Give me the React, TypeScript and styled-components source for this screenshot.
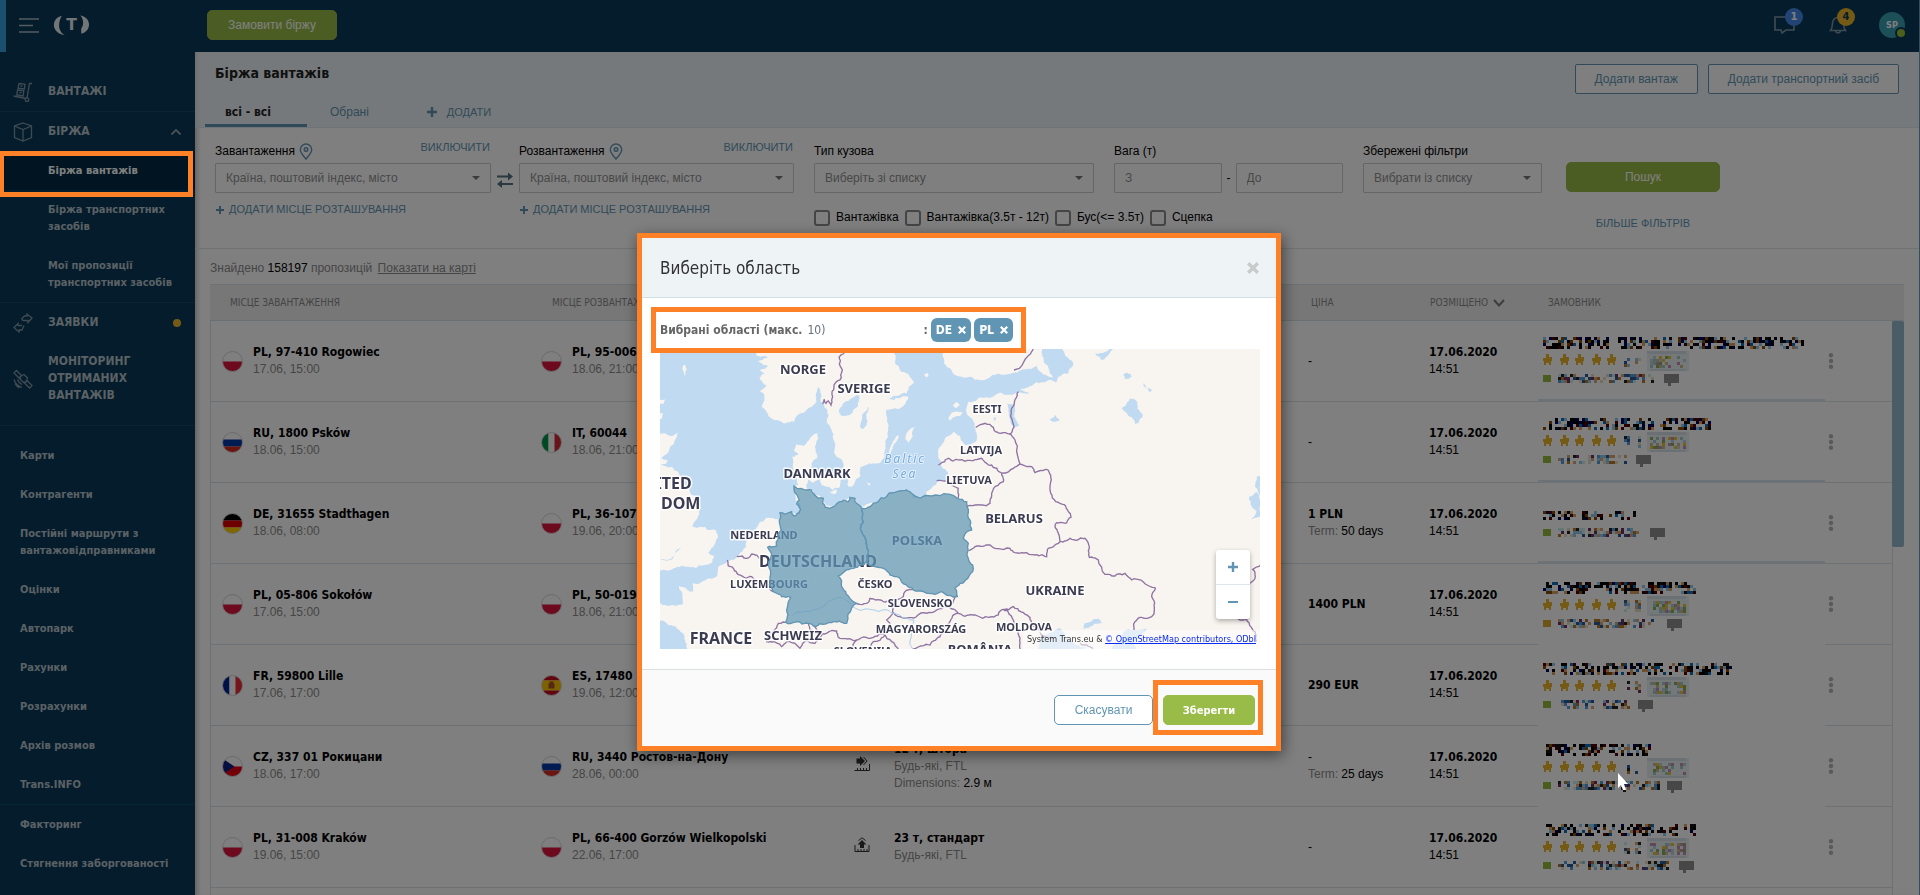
import React from 'react';
import styled, { createGlobalStyle, css } from 'styled-components';

const sans = '"Liberation Sans", Arial, sans-serif';
const strong = '"DejaVu Sans Condensed", "DejaVu Sans", Tahoma, sans-serif';
const orange = '#ff8127';
const blue = '#6095b3';
const green = '#99bb48';

const Global = createGlobalStyle`
  * { box-sizing: border-box; }
  body { margin: 0; font: 12px/17px ${sans}; color: #000; background: #fff; }
  button, input, select { font: inherit; margin: 0; }
  button { cursor: pointer; }
  a { color: inherit; text-decoration: none; }
  h1, h2, ul { margin: 0; padding: 0; list-style: none; }
`;

const Page = styled.div`
  display: flex;
  flex-direction: column;
  height: 100vh;
  overflow: hidden;
  border-right: 1px solid #6a9dbd;
`;

/* ---------- top bar ---------- */
const TopBar = styled.header`
  display: flex;
  align-items: center;
  flex: none;
  height: 52px;
  padding: 0 14px 2px 0;
  background: #083856;
  border-left: 6px solid #34a0da;
`;
const IconButton = styled.button`
  display: flex;
  position: relative;
  padding: 0;
  border: 0;
  background: none;
`;
const Brand = styled.div`
  display: flex;
  align-items: center;
  gap: 14px;
  width: 201px;
  padding-left: 13px;
`;
const Button = styled.button<{ $kind: 'fill' | 'line'; $radius?: number }>`
  height: 30px;
  padding: 0 19px;
  border: 1px solid ${(p) => (p.$kind === 'fill' ? green : blue)};
  border-radius: ${(p) => p.$radius ?? 5}px;
  background: ${(p) => (p.$kind === 'fill' ? green : '#fff')};
  color: ${(p) => (p.$kind === 'fill' ? '#fff' : blue)};
  white-space: nowrap;
`;
const OrderButton = styled(Button)`
  width: 130px;
  padding: 0;
`;
const TopIcons = styled.div`
  display: flex;
  align-items: center;
  gap: 34px;
  margin-left: auto;
`;
const Badge = styled.span<{ $warn?: boolean }>`
  position: absolute;
  top: -8px;
  right: -8px;
  width: 18px;
  height: 18px;
  border-radius: 50%;
  background: ${(p) => (p.$warn ? '#eab42a' : '#4389e8')};
  color: ${(p) => (p.$warn ? '#083856' : '#fff')};
  font: bold 11px/18px ${strong};
  text-align: center;
`;
const Avatar = styled(IconButton)`
  align-items: center;
  justify-content: center;
  width: 26px;
  height: 26px;
  margin-left: -2px;
  border-radius: 50%;
  background: #3a9eb2;
  color: #fff;
  font: bold 9px/12px ${strong};
`;
const Presence = styled.span`
  position: absolute;
  right: -2px;
  bottom: -1px;
  width: 12px;
  height: 12px;
  border: 2px solid #083856;
  border-radius: 50%;
  background: #9bbf3a;
`;

/* ---------- side menu ---------- */
const Body = styled.div`
  display: flex;
  flex: 1;
  min-height: 0;
`;
const Side = styled.nav`
  flex: none;
  width: 195px;
  padding-top: 20px;
  background: #083856;
  font: bold 11px/17px ${strong};
  color: #b6c2ca;
`;
const Group = styled.ul<{ $last?: boolean; $loose?: boolean }>`
  border-bottom: ${(p) => (p.$last ? 0 : 1)}px solid #10486a;
  ${(p) => p.$loose && css`padding-bottom: 10px;`}
`;
const MoreGroup = styled(Group)`
  &:first-of-type { padding-top: 10px; }
`;
const SideLink = styled.a<{ $level?: 1 | 2; $active?: boolean }>`
  display: flex;
  align-items: center;
  padding: 11px 14px 11px ${(p) => (p.$level === 2 ? 48 : p.$level === 1 ? 13 : 20)}px;
  ${(p) => p.$active && css`background: #002b43; color: #fff;`}
  svg { flex: none; margin: -2px 0; }
`;
const TopLabel = styled.span`
  flex: 1;
  margin-left: 15px;
  font-size: 12px;
`;
const Dot = styled.span`
  width: 8px;
  height: 8px;
  border-radius: 50%;
  background: #eab42a;
`;

/* ---------- content header ---------- */
const Main = styled.main`
  display: flex;
  flex-direction: column;
  flex: 1;
  min-width: 0;
  box-shadow: inset 5px 0 5px -3px rgba(0, 0, 0, 0.25);
`;
const PageHead = styled.div`
  display: flex;
  justify-content: space-between;
  flex: none;
  height: 76px;
  padding: 10px 20px 0 10px;
  border-bottom: 1px solid #dbe6ec;
  background: rgba(228, 237, 241, 0.65);
`;
const HeadLeft = styled.div`
  display: flex;
  flex-direction: column;
  justify-content: space-between;
`;
const PageTitle = styled.h1`
  padding-left: 10px;
  font: bold 14px/22px ${strong};
  color: #222;
`;
const Tabs = styled.div`
  display: flex;
  gap: 3px;
`;
const Tab = styled.button<{ $active?: boolean }>`
  display: flex;
  align-items: center;
  gap: 10px;
  height: 27px;
  padding: 0 20px 0 20px;
  border: 0;
  border-bottom: 3px solid ${(p) => (p.$active ? blue : 'transparent')};
  background: none;
  color: ${blue};
  ${(p) => p.$active && css`width: 102px; color: #222; font: bold 12px/17px ${strong};`}
`;
const AddTab = styled(Tab)`
  margin-left: 15px;
  font-size: 11px;
`;
const HeadActions = styled.div`
  display: flex;
  gap: 10px;
  padding-top: 2px;
`;

/* ---------- filters ---------- */
const Filters = styled.form`
  display: grid;
  grid-template-columns: 276fr 28px 275fr 20px 280fr 20px 229fr 20px 179fr 24px 154fr;
  flex: none;
  height: 121px;
  padding: 0 199px 0 20px;
  border-bottom: 1px solid #dfe5e9;
`;
const Field = styled.div<{ $col: number }>`
  grid-column: ${(p) => p.$col};
  min-width: 0;
`;
const LabelRow = styled.div`
  display: flex;
  justify-content: space-between;
  height: 35px;
`;
const Label = styled.label`
  display: flex;
  gap: 4px;
  padding-top: 15px;
  white-space: nowrap;
`;
const LinkButton = styled.button<{ $top?: number }>`
  display: flex;
  align-items: center;
  gap: 5px;
  height: 17px;
  margin-top: ${(p) => p.$top ?? 0}px;
  padding: 0 1px;
  border: 0;
  background: none;
  color: ${blue};
  font-size: 11px;
  white-space: nowrap;
`;
const CenterLink = styled(LinkButton)`
  margin-left: auto;
  margin-right: auto;
`;
const SelectBox = styled.div`
  position: relative;
  display: flex;
  svg { position: absolute; right: 11px; top: 13px; pointer-events: none; }
`;
const control = css`
  width: 100%;
  height: 30px;
  padding: 0 10px;
  border: 1px solid #ccc;
  border-radius: 1px;
  background: #fff;
  color: #909090;
`;
const Select = styled.select`
  ${control}
  appearance: none;
`;
const Input = styled.input`
  ${control}
  &::placeholder { color: #909090; }
`;
const Range = styled.div`
  display: flex;
  align-items: center;
  gap: 5px;
`;
const Swap = styled.button`
  grid-column: 2;
  display: flex;
  justify-content: center;
  align-items: center;
  height: 17px;
  margin-top: 43px;
  padding: 0;
  border: 0;
  background: none;
`;
const Checks = styled.div`
  display: flex;
  gap: 6px;
  padding-top: 16px;
`;
const Check = styled.label`
  display: flex;
  align-items: center;
  gap: 6px;
  white-space: nowrap;
  input {
    appearance: none;
    width: 16px;
    height: 16px;
    border: 2px solid #8a8a8a;
    border-radius: 3px;
  }
`;
const SearchButton = styled(Button)`
  width: 100%;
  margin-top: 34px;
`;

/* ---------- result list ---------- */
const Results = styled.section`
  display: flex;
  flex-direction: column;
  flex: 1;
  min-height: 0;
  padding: 0 15px;
`;
const Summary = styled.p`
  margin: 0;
  padding: 11px 0 7px;
  color: #8c8c8c;
  b { font-weight: normal; color: #000; }
  a { margin-left: 2px; text-decoration: underline; }
`;
const TableArea = styled.div`
  position: relative;
  flex: 1;
  min-height: 0;
  overflow: hidden;
`;
const Table = styled.table`
  width: 100%;
  table-layout: fixed;
  border-spacing: 0;
`;
const Th = styled.th<{ $w?: number; $pad?: number }>`
  width: ${(p) => (p.$w ? `${p.$w}px` : 'auto')};
  height: 37px;
  padding: 0 0 0 ${(p) => p.$pad ?? 0}px;
  border-top: 1px solid #dde3e6;
  border-bottom: 1px solid #d3dee4;
  background: #eee;
  color: #8a8a8a;
  font: 10px/17px ${strong};
  text-align: left;
  white-space: nowrap;
  svg { vertical-align: middle; margin-left: 5px; }
`;
const Td = styled.td<{ $pad?: number; $edge?: boolean; $rule?: 'thin' | 'thick' | 'none' }>`
  height: 81px;
  padding: 0 0 0 ${(p) => p.$pad ?? 0}px;
  border-left: ${(p) => (p.$edge ? 1 : 0)}px solid #dbe3e8;
  border-bottom: ${(p) => (p.$rule === 'thick' ? '3px solid #dbe5ec' : p.$rule === 'none' ? '0' : '1px solid #dbe3e8')};
  white-space: nowrap;
  overflow: hidden;
`;
const Place = styled.div`
  display: flex;
  align-items: center;
  gap: 10px;
`;
const Name = styled.div`
  font: bold 12px/17px ${strong};
`;
const Muted = styled.span`
  color: #8c8c8c;
`;
const Line = styled.div``;
const ScrollThumb = styled.div`
  position: absolute;
  top: 37px;
  right: 0;
  width: 12px;
  height: 226px;
  border-radius: 2px;
  background: #94b8ca;
`;

/* ---------- dialog ---------- */
const Overlay = styled.div`
  position: fixed;
  inset: 0;
  display: flex;
  justify-content: center;
  align-items: flex-start;
  padding: 233px 2px 0 0;
  background: rgba(0, 0, 0, 0.5);
`;
const Dialog = styled.section`
  width: 644px;
  border: 5px solid ${orange};
  background: #fff;
  box-shadow: 2px 4px 14px rgba(0, 0, 0, 0.5);
`;
const DialogHead = styled.div`
  display: flex;
  justify-content: space-between;
  align-items: center;
  height: 60px;
  padding: 0 17px 0 18px;
  border-bottom: 1px solid #d3dfe6;
  background: #eef4f6;
`;
const DialogTitle = styled.h2`
  font: 17px/24px ${strong};
  color: #333;
`;
const DialogBody = styled.div`
  padding: 9px 16px 20px 9px;
  border-bottom: 1px solid #dcdfe0;
`;
const Selected = styled.div`
  display: flex;
  align-items: center;
  position: relative;
  z-index: 1;
  width: 375px;
  height: 46px;
  padding: 0 8px 0 4px;
  border: 5px solid ${orange};
  color: #666;
  font: bold 12px/17px ${strong};
`;
const Amount = styled.span`
  flex: 1;
  padding-left: 5px;
  font: 12px/17px ${strong};
  color: #66707c;
`;
const Tag = styled.span`
  display: flex;
  align-items: center;
  gap: 6px;
  height: 24px;
  margin-left: 3px;
  padding: 0 5px;
  border-radius: 6px;
  background: ${blue};
  color: #fff;
  font: bold 12px/17px ${strong};
`;
const MapBox = styled.div`
  position: relative;
  height: 300px;
  margin: -4px 0 0 9px;
  overflow: hidden;
  svg { display: block; }
`;
const ZoomBox = styled.div`
  position: absolute;
  right: 10px;
  bottom: 30px;
  width: 34px;
  border-radius: 3px;
  background: #fff;
  box-shadow: 0 2px 5px rgba(0, 0, 0, 0.3);
`;
const ZoomButton = styled.button`
  display: flex;
  align-items: center;
  justify-content: center;
  width: 34px;
  height: 34px;
  padding: 0;
  border: 0;
  background: none;
  & + & { height: 35px; border-top: 1px solid #dbe5ec; }
`;
const Credit = styled.div`
  position: absolute;
  right: 0;
  bottom: 0;
  padding: 1px 4px 1px 4px;
  background: rgba(255, 255, 255, 0.55);
  color: #333;
  font: 9px/17px ${strong};
  a { color: #0a2bf0; text-decoration: underline; }
`;
const DialogFoot = styled.div`
  display: flex;
  justify-content: flex-end;
  align-items: flex-start;
  height: 76px;
  padding: 10px 13px 0 0;
  background: #fafafa;
`;
const CancelButton = styled(Button)`
  width: 99px;
  margin-top: 15px;
`;
const SaveFrame = styled.div`
  display: flex;
  height: 55px;
  padding: 10px 3px 5px 5px;
  border: 5px solid ${orange};
`;
const SaveButton = styled(Button)`
  width: 92px;
  padding: 0;
  font: bold 11px/17px ${strong};
`;
const MenuFrame = styled.div`
  position: absolute;
  top: 151px;
  left: 0;
  width: 193px;
  height: 46px;
  border: 5px solid ${orange};
  border-left-width: 4px;
`;
const Pointer = styled.svg`
  position: absolute;
  top: 773px;
  left: 1617px;
`;

/* ---------- small drawings ---------- */
const Plus = ({ size = 8, color = blue }: { size?: number; color?: string }) => (
  <svg width={size} height={size} viewBox="0 0 10 10" stroke={color} strokeWidth="2.4">
    <path d="M5 0V10M0 5H10" />
  </svg>
);
const Caret = () => (
  <svg width="8" height="4" viewBox="0 0 8 4"><path d="M0 0H8L4 4Z" fill="#777" /></svg>
);
const Pin = () => (
  <svg width="14" height="17" viewBox="0 0 14 17" fill="none" stroke={blue} strokeWidth="1.4">
    <path d="M7 16C4 12.500 1.300 9.600 1.300 6.700a5.700 5.700 0 0 1 11.400 0C12.700 9.600 10 12.500 7 16Z" />
    <circle cx="7" cy="6.500" r="1.800" />
  </svg>
);
const Cross = ({ color, size = 8 }: { color: string; size?: number }) => (
  <svg width={size} height={size} viewBox="0 0 10 10" stroke={color} strokeWidth="2.800"><path d="M1 1L9 9M9 1L1 9" /></svg>
);

const iconProps = { width: 20, height: 20, viewBox: '0 0 20 20', fill: 'none', stroke: '#7f97a6', strokeWidth: 1.3 };
const CartIcon = () => (
  <svg {...iconProps}>
    <path d="M19 1.500H16.500L14 16M0.500 14L13 16.500M6 1.500L12 2.200L11.300 7L5 6.200ZM4.500 8L10.800 8.800L10 14L3.800 13Z" />
    <path d="M7.500 4L9.500 4.200M6.500 10.500L8.500 10.800" />
    <circle cx="14" cy="17.700" r="1.800" />
  </svg>
);
const BoxIcon = () => (
  <svg {...iconProps}><path d="M10 1L18.500 4V15.500L10 19L1.500 15.500V4ZM1.500 4L10 7.500L18.500 4M10 7.500V19" /></svg>
);
const OrdersIcon = () => (
  <svg {...iconProps}>
    <path d="M9 5.500L11.500 3H14V1L19 5L15 9.500V7.500H11Q8.500 7.500 9 5.500Z" />
    <path d="M11 12.500L9 17H6V19L1 14.500L5 10.500V12.500H9" />
  </svg>
);
const SatelliteIcon = () => (
  <svg {...iconProps}>
    <path d="M3.500 1.500L8.500 6.500L6 9L1 4ZM14 11.500L19 16.500L16.500 19L11.500 14ZM8 7L11 5.500L14.500 9L13 13L10.500 13.500L7 10Z" />
    <path d="M1 10.500Q2.500 16 9 18.500M2 14.500Q3.500 17.500 6.500 18.800M4.500 10.500Q5.500 13.500 9 15.500" />
  </svg>
);

const LoadIcon = ({ side }: { side?: boolean }) => (
  <svg width="16" height="16" viewBox="0 0 16 16">
    <path d={side ? 'M0.500 14.500H15.500V8M3.500 14V12M6.500 14V12M9.500 14V12M12.500 14V12' : 'M1 8V14.500H15V8M4 14V12M7 14V12M10 14V12M13 14V12'} fill="none" stroke="#333" />
    {side ? (
      <g fill="#333"><path d="M2.500 2.500H6V0L11 5L6 10V7.500H2.500Z" /><path d="M9.500 1L13 5L9.500 9" fill="none" stroke="#333" /></g>
    ) : (
      <g fill="#333"><path d="M6 11V7.500H3.500L8 3L12.500 7.500H10V11Z" /><path d="M4.500 3.500L8 0.800L11.500 3.500" fill="none" stroke="#333" /></g>
    )}
  </svg>
);

type Code = 'PL' | 'RU' | 'DE' | 'FR' | 'CZ' | 'IT' | 'ES';
const stripes: Record<Code, { v?: boolean; c: [string, number][] }> = {
  PL: { c: [['#fff', 10], ['#dc143c', 10]] },
  RU: { c: [['#fff', 7], ['#0039a6', 7], ['#d52b1e', 6]] },
  DE: { c: [['#000', 7], ['#dd0000', 7], ['#ffce00', 6]] },
  FR: { v: true, c: [['#002395', 7], ['#fff', 6], ['#ed2939', 7]] },
  IT: { v: true, c: [['#009246', 7], ['#fff', 6], ['#ce2b37', 7]] },
  CZ: { c: [['#fff', 10], ['#e60010', 10]] },
  ES: { c: [['#c60b1e', 5], ['#ffc400', 10], ['#c60b1e', 5]] },
};
const Flag = ({ code }: { code: Code }) => {
  let at = 0;
  const s = stripes[code];
  return (
    <svg width="21" height="21" viewBox="-0.500 -0.500 21 21">
      <clipPath id={`flag-${code}`}><circle cx="10" cy="10" r="10" /></clipPath>
      <g clipPath={`url(#flag-${code})`}>
        {s.c.map(([fill, n], i) => {
          const p = at;
          at += n;
          return s.v ? <rect key={i} x={p} y="0" width={n} height="20" fill={fill} /> : <rect key={i} x="0" y={p} width="20" height={n} fill={fill} />;
        })}
        {code === 'CZ' && <path d="M0 2L12 10L0 18Z" fill="#0a2080" />}
        {code === 'ES' && <path d="M7 8h1v-2h4v2h1v5H7Z" fill="#a8502a" />}
      </g>
      <circle cx="10" cy="10" r="10" fill="none" stroke="#d4d4d4" />
    </svg>
  );
};

/* ---------- pixelated customer data ---------- */
const rand = (seed: number) => {
  let s = seed * 7919 + 17;
  return () => {
    s = (s * 1103515245 + 12345) % 2147483648;
    return s / 2147483648;
  };
};
const inkDark = ['#000', '#000', '#000', '#111', '#0a70b8', '#8a4a00', '#d8a060', '#90c8e8', '#500000', '#00005a'];
const inkSoft = ['#2a5a9a', '#222', '#90c8e8', '#d8a878', '#703060', '#c8ecec', '#b87828', '#5a9ad8', '#e8dcc0'];
const inkBadge = ['#c8b888', '#a0c8c0', '#e8c030', '#c090b0', '#b8d0dc', '#90a860'];
const Mosaic = ({ x, y, w, h, ink, seed, fill }: { x: number; y: number; w: number; h: number; ink: string[]; seed: number; fill: number }) => {
  const r = rand(seed);
  const out: React.ReactNode[] = [];
  for (let cx = 0; cx < w; cx += 3) {
    if (r() < 0.1) continue;
    for (let cy = 0; cy < h; cy += 3) {
      if (r() < fill) out.push(<rect key={`${cx}-${cy}`} x={x + cx} y={y + cy} width="3" height="3" fill={ink[Math.floor(r() * ink.length)]} />);
    }
  }
  return <g shapeRendering="crispEdges">{out}</g>;
};
type Client = { name: number; sub: number; chat: number; stars: boolean; mark?: string };
const ClientArt = ({ c, seed }: { c: Client; seed: number }) => {
  const top = c.stars ? 16 : 28;
  const third = c.stars ? 53 : 45;
  return (
    <svg width="285" height="78" viewBox="0 0 285 78" display="block">
      <Mosaic x={5} y={top} w={c.name} h={c.stars ? 11 : 8} ink={inkDark} seed={seed} fill={0.62} />
      {c.stars && (
        <g shapeRendering="crispEdges">
          {[5, 22, 37, 54, 69].map((x) => (
            <path key={x} transform={`translate(${x} 33)`} d="M3 0h3v3h3v4h-1v4h-2v-2h-3v2h-2v-4h-1v-3h3Z" fill="#eab42a" />
          ))}
          <Mosaic x={86} y={34} w={6} h={11} ink={inkSoft} seed={seed + 31} fill={0.55} />
          <Mosaic x={97} y={34} w={6} h={11} ink={inkSoft} seed={seed + 37} fill={0.6} />
          <rect x="109" y="30" width="42" height="20" fill="#eaf0f3" />
          <rect x="109" y="30" width="39" height="3" fill="#d5e0e7" />
          <rect x="112" y="48" width="36" height="2" fill="#d5e0e7" />
          <Mosaic x={112} y={35} w={36} h={11} ink={inkBadge} seed={seed + 41} fill={0.6} />
        </g>
      )}
      <rect x="5" y={third + 1} width="8" height="7" fill={c.mark ?? '#94ba3e'} />
      <Mosaic x={20} y={third} w={c.sub} h={9} ink={inkSoft} seed={seed + 53} fill={0.65} />
      <path transform={`translate(${c.chat} ${third})`} d="M0 0H15V9H7V12H4V9H0Z" fill="#8f8f8f" />
    </svg>
  );
};

/* ---------- map ---------- */
type P = [number, number];
const pts = (s: string): P[] => s.trim().split(/\s+/).map((q) => q.split(',').map(Number) as P);
const hash = (a: number, b: number) => {
  const v = Math.sin(a * 12.9898 + b * 78.233) * 43758.5453;
  return v - Math.floor(v) - 0.5;
};
const split = (a: P, b: P, k: number, depth: number): P[] => {
  const len = Math.hypot(b[0] - a[0], b[1] - a[1]);
  if (depth === 0 || len < 9 || len > 400) return [b];
  const mx = (a[0] + b[0]) / 2;
  const my = (a[1] + b[1]) / 2;
  const m: P = [mx + hash(mx, my) * len * k, my + hash(my, mx) * len * k];
  return [...split(a, m, k, depth - 1), ...split(m, b, k, depth - 1)];
};
const path = (s: string, closed = true, k = 0.32) => {
  const p = pts(s);
  const ring = closed ? [...p, p[0]] : p;
  let out: P[] = [ring[0]];
  for (let i = 1; i < ring.length; i++) out = out.concat(split(ring[i - 1], ring[i], k, 3));
  return 'M' + out.map((q) => `${Math.round(q[0])},${Math.round(q[1])}`).join('L') + (closed ? 'Z' : '');
};

const land = [
  '50,305 112,308 105,330 88,360 64,384 84,392 62,402 98,412 130,450 150,485 165,500 182,530 172,565 158,590 195,590 228,600 234,622 220,650 205,668 222,678 218,694 190,706 150,712 110,712 85,722 50,732',
  '50,815 95,825 128,822 127,795 117,768 140,778 160,785 158,760 200,748 232,738 235,710 265,692 290,680 300,670 318,650 325,620 345,600 360,575 385,563 418,566 420,548 455,545 470,555 482,545 478,520 465,495 462,470 475,465 470,440 458,410 456,380 475,375 462,362 470,342 495,345 510,325 532,308 535,325 525,350 532,380 515,400 510,430 505,450 500,475 520,482 520,495 550,505 558,525 575,530 600,515 625,505 640,500 650,515 665,530 700,520 740,500 765,487 800,480 815,487 822,493 812,490 820,505 840,505 860,500 858,488 875,475 890,460 925,450 922,425 905,410 895,385 900,350 915,325 940,305 960,318 975,345 990,345 1008,335 1010,310 1003,290 998,268 984,258 978,240 985,215 1020,202 1070,192 1130,188 1150,190 1175,192 1140,178 1170,168 1205,157 1245,155 1200,125 1190,106 1150,118 1105,132 1050,142 1005,150 965,140 945,135 920,110 908,75 912,50 1870,50 1870,967 143,967 135,930 118,900 85,885 50,867',
  '350,50 350,78 385,82 354,95 385,108 358,120 375,130 358,145 380,165 360,182 372,192 365,230 385,258 430,280 462,275 500,240 530,215 535,170 542,215 552,222 562,240 575,300 585,340 590,380 610,400 615,440 625,470 635,470 660,440 665,410 700,400 720,400 735,360 745,300 738,240 780,235 805,200 745,208 800,190 822,160 800,130 765,100 762,50',
  '540,440 560,425 590,430 605,445 600,470 578,480 560,470 545,465', '510,430 530,432 535,450 520,458 508,450', '800,310 810,298 826,290 818,318 805,340 798,330', '745,378 752,350 776,315 758,352',
  '680,457 692,461 688,468', '925,265 935,248 968,248 960,258 940,262 930,272', '938,225 950,215 960,225 948,235', '852,132 862,128 866,136 858,142', '128,112 136,104 140,118 132,138', '60,210 76,208 70,222 58,220', '50,245 70,250 66,266 50,272', '300,668 318,664 312,674', '568,485 590,478 586,492',
];
const water = [
  '597,240 610,220 635,205 655,195 654,228 628,256 605,258', '660,290 666,255 686,230 680,262 668,298', '1210,50 1265,50 1300,105 1285,130 1255,140 1248,158 1228,120 1212,98 1205,70', '1365,70 1395,66 1420,55 1400,80 1385,90', '1450,135 1460,128 1475,140 1455,148', '1510,158 1536,180 1528,187 1515,172',
  '1445,235 1470,205 1486,210 1492,235 1508,258 1495,280 1485,282 1475,262 1455,245', '1230,268 1245,254 1260,270 1240,275', '1100,220 1125,224 1122,258 1138,285 1122,292 1108,262', '1850,440 1862,440 1862,500 1845,470', '1828,500 1850,485 1862,560 1835,568 1850,545 1832,525', '1330,898 1334,880 1375,866 1385,880 1350,890', '1290,785 1310,795 1308,802', '1185,970 1200,925 1235,905 1262,895 1280,925 1340,950 1320,970', '1400,970 1440,935 1450,905 1475,900 1520,896 1495,925 1480,945 1500,970', '60,688 125,655 98,686 80,692',
  '1062,262 1068,262 1066,272 1061,270',
];
const borders = [
  '613,70 598,80 607,120 600,150 582,165 578,200 573,225 565,213 558,220 553,208 548,222', '290,680 320,685 335,672 358,685 375,680 388,690', '262,690 265,708 300,735 318,745 335,740 365,765 400,785', '437,877 415,880 400,905 380,935 405,935 425,950 440,935 465,940 480,955 500,930 525,940 545,915 525,890',
  '505,880 510,900 545,912 590,903 600,925 650,930 700,922 735,912 750,880 740,870 758,850', '650,822 680,820 690,805 730,815 755,815 790,800 795,785 820,778', '755,815 758,848 775,860 815,863 850,848 875,848 900,835 925,830 945,800 952,797', '925,830 955,850 930,875 900,920 870,945 820,957', '955,850 1000,855 1028,865 1075,855 1090,838 1120,830 1150,848 1170,862 1175,880 1200,905 1240,925', '1090,838 1120,870 1135,900 1140,957',
  '890,452 905,452 955,475 955,505', '895,405 925,385 960,390 1000,392 1025,385 1040,400 1055,405 1085,430', '1007,292 1035,280 1060,292 1080,310 1110,312', '1135,185 1130,200 1115,235 1115,265 1122,292 1110,312 1125,330 1130,360 1140,402', '1085,430 1120,415 1140,402 1175,410 1185,428 1220,418 1232,435 1230,470 1260,520 1285,545 1293,562 1280,578 1250,578 1245,590 1255,610 1260,635',
  '985,662 1005,650 1050,645 1110,655 1125,668 1160,668 1185,675 1220,680 1225,655 1260,635', '1260,635 1280,632 1290,625 1335,625 1348,655 1348,682 1375,690 1390,728 1425,738 1455,730 1475,750 1545,773 1535,800 1535,860 1505,862 1485,875 1482,900', '1085,430 1090,455 1065,470 1055,490 1050,520 1020,525 980,533', '1122,120 1180,57', '1862,705 1838,718 1845,745 1830,760', '1790,865 1820,868 1845,905 1850,935', '735,915 755,935 775,957', '650,930 640,957', '735,915 700,935 685,957', '1320,940 1360,955',
];
const germany = '462,468 472,476 500,480 514,480 522,492 535,505 550,505 548,520 556,532 580,530 600,515 625,515 630,502 645,505 650,520 665,535 670,575 662,600 675,625 680,645 685,665 680,695 660,705 640,715 595,738 605,770 625,798 650,820 625,850 620,880 585,875 555,882 525,890 505,880 470,875 437,877 440,840 452,803 425,800 400,785 388,765 392,730 385,700 395,672 383,652 410,648 415,625 425,600 418,570 420,548 455,545 462,558 478,548 482,538 470,522 478,510 468,492';
const poland = '665,535 700,520 740,500 765,487 800,480 815,490 840,505 955,507 980,515 990,570 995,600 970,625 985,640 985,685 998,705 998,725 960,760 945,775 952,800 905,785 865,790 820,780 780,745 750,735 730,715 680,695 685,665 680,645 675,625 662,600 670,575';

const MapText = styled.text<{ $size: number }>`
  font: bold ${(p) => p.$size}px "Noto Sans", "Open Sans", sans-serif;
  fill: #3b3b52;
  stroke: rgba(255, 255, 255, 0.85);
  stroke-width: 3px;
  stroke-linejoin: round;
  paint-order: stroke;
  text-anchor: middle;
`;
const SeaText = styled(MapText)`
  font-weight: normal;
  font-style: italic;
  fill: #74abe0;
  letter-spacing: 2px;
  stroke-width: 2px;
  stroke: rgba(255, 255, 255, 0.6);
`;
/* name, centre x, baseline y, size */
const places: [string, number, number, number][] = [
  ['NORGE', 143, 25, 13], ['SVERIGE', 204, 44, 13], ['DANMARK', 157, 129, 13], ['NEDERLAND', 104, 190, 11], ['DEUTSCHLAND', 158, 218, 16], ['LUXEMBOURG', 109, 239, 11], ['POLSKA', 257, 196, 13], ['ČESKO', 215, 239, 11], ['SLOVENSKO', 260, 258, 11], ['MAGYARORSZÁG', 261, 284, 11], ['SCHWEIZ', 133, 291, 13], ['FRANCE', 61, 295, 16],
  ['SLOVENIJA', 203, 306, 11], ['ROMÂNIA', 320, 305, 13], ['MOLDOVA', 364, 282, 11], ['UKRAINE', 395, 246, 13], ['BELARUS', 354, 174, 13], ['LIETUVA', 309, 135, 11], ['LATVIJA', 321, 105, 11], ['EESTI', 327, 64, 11], ['UNITED', 1, 140, 16], ['KINGDOM', 0, 160, 16],
];

const RegionMap = () => (
  <svg width="600" height="300" viewBox="0 0 600 300" role="img" aria-label="Карта Європи">
    <rect width="600" height="300" fill="#c0daf1" />
    <g transform="translate(-20 -19) scale(0.33333)">
      {land.map((s, i) => <path key={i} d={path(s)} fill="#f8f4ef" />)}
      {water.map((s, i) => <path key={i} d={path(s)} fill="#c0daf1" />)}
      {borders.map((s, i) => <path key={i} d={path(s, false)} fill="none" stroke="#8f74a3" strokeWidth="4" />)}
      <path d={path('458,855 510,845 590,803 630,820 700,840 740,840 760,850 822,870 822,967', false)} fill="none" stroke="#a8cdea" strokeWidth="3" />
    </g>
    {places.map(([t, x, y, s]) => <MapText key={t} x={x} y={y} $size={s}>{t}</MapText>)}
    <SeaText x="245" y="114" $size={12}>Baltic</SeaText>
    <SeaText x="245" y="129" $size={12}>Sea</SeaText>
    <g transform="translate(-20 -19) scale(0.33333)" fill="rgba(96,149,179,0.72)" stroke={blue} strokeWidth="4">
      <path d={path(germany)} />
      <path d={path(poland)} />
    </g>
  </svg>
);

/* ---------- data ---------- */
type Row = {
  from: [Code, string, string];
  to: [Code, string, string];
  price?: string;
  term?: string;
  load?: 'side' | 'top';
  body?: string;
  size?: string;
  client: Client;
  rule: 'thin' | 'thick' | 'none';
};
const rows: Row[] = [
  { from: ['PL', 'PL, 97-410 Rogowiec', '17.06, 15:00'], to: ['PL', 'PL, 95-006', '18.06, 21:00'], client: { name: 264, sub: 95, chat: 126, stars: true }, rule: 'thick' },
  { from: ['RU', 'RU, 1800 Psków', '18.06, 15:00'], to: ['IT', 'IT, 60044', '18.06, 21:00'], client: { name: 168, sub: 69, chat: 98, stars: true }, rule: 'thick' },
  { from: ['DE', 'DE, 31655 Stadthagen', '18.06, 08:00'], to: ['PL', 'PL, 36-107', '19.06, 20:00'], price: '1 PLN', term: '50 days', client: { name: 92, sub: 80, chat: 112, stars: false }, rule: 'thick' },
  { from: ['PL', 'PL, 05-806 Sokołów', '17.06, 15:00'], to: ['PL', 'PL, 50-019', '18.06, 21:00'], price: '1400 PLN', client: { name: 151, sub: 97, chat: 129, stars: true, mark: '#d8a830' }, rule: 'none' },
  { from: ['FR', 'FR, 59800 Lille', '17.06, 17:00'], to: ['ES', 'ES, 17480', '19.06, 12:00'], price: '290 EUR', client: { name: 192, sub: 72, chat: 100, stars: true }, rule: 'none' },
  { from: ['CZ', 'CZ, 337 01 Рокицани', '18.06, 17:00'], to: ['RU', 'RU, 3440 Ростов-на-Дону', '28.06, 00:00'], term: '25 days', load: 'side', body: '12 т, штора', size: '2.9 м', client: { name: 106, sub: 100, chat: 129, stars: true }, rule: 'none' },
  { from: ['PL', 'PL, 31-008 Kraków', '19.06, 15:00'], to: ['PL', 'PL, 66-400 Gorzów Wielkopolski', '22.06, 17:00'], load: 'top', body: '23 т, стандарт', client: { name: 152, sub: 111, chat: 141, stars: true }, rule: 'thin' },
];
const moreLinks = ['Карти', 'Контрагенти', 'Постійні маршрути з вантажовідправниками', 'Оцінки', 'Автопарк', 'Рахунки', 'Розрахунки', 'Архів розмов', 'Trans.INFO'];

const PlaceCell = ({ p }: { p: [Code, string, string] }) => (
  <Place>
    <Flag code={p[0]} />
    <div>
      <Name>{p[1]}</Name>
      <Muted>{p[2]}</Muted>
    </div>
  </Place>
);

const Picker = ({ id, text }: { id: string; text: string }) => (
  <SelectBox>
    <Select id={id}><option>{text}</option></Select>
    <Caret />
  </SelectBox>
);

export default function App() {
  return (
    <>
      <Global />
      <Page>
        <TopBar>
          <Brand>
            <IconButton aria-label="Меню">
              <svg width="20" height="15" viewBox="0 0 20 15" stroke="#a9b9c4" strokeWidth="1.500"><path d="M0 1H20M0 7.500H14M0 14H20" /></svg>
            </IconButton>
            <svg width="37" height="24" viewBox="0 0 38 24" fill="#e6ecef">
              <path d="M9 2.500C3.500 4 0.500 8 1 13C1.500 18 6 21.500 12 22.500C8 20 6 16 6.300 11.500C6.500 8 7.500 5 9 2.500Z" />
              <path d="M28 2C34 3.500 37 7 37 11.500C37 17 33 20 29 21V15.500C32 12 31.500 6 28 2Z" />
              <text x="19" y="17" textAnchor="middle" fontFamily="DejaVu Sans" fontWeight="bold" fontSize="16">T</text>
            </svg>
          </Brand>
          <OrderButton $kind="fill">Замовити біржу</OrderButton>
          <TopIcons>
            <IconButton aria-label="Повідомлення">
              <svg width="21" height="18" viewBox="0 0 21 18" fill="none" stroke="#7f97a6" strokeWidth="1.600"><path d="M12 1H1V14H7L8 17L12 14H20V9" /></svg>
              <Badge>1</Badge>
            </IconButton>
            <IconButton aria-label="Сповіщення">
              <svg width="18" height="18" viewBox="0 0 18 18" fill="none" stroke="#7f97a6" strokeWidth="1.500"><path d="M1.500 14.500C3.500 12.500 3 10 3.500 7C4 3.500 6.500 1.500 9 1.500S14 3.500 14.500 7C15 10 14.500 12.500 16.500 14.500ZM6.500 15C7 17.500 11 17.500 11.500 15" /></svg>
              <Badge $warn>4</Badge>
            </IconButton>
            <Avatar aria-label="Профіль">SP<Presence /></Avatar>
          </TopIcons>
        </TopBar>
        <Body>
          <Side>
            <Group><li><SideLink href="#" $level={1}><CartIcon /><TopLabel>ВАНТАЖІ</TopLabel></SideLink></li></Group>
            <Group>
              <li>
                <SideLink href="#" $level={1}>
                  <BoxIcon /><TopLabel>БІРЖА</TopLabel>
                  <svg width="10" height="6" viewBox="0 0 10 6" fill="none" stroke="#9fb0bb" strokeWidth="1.600"><path d="M0.500 5.500L5 1L9.500 5.500" /></svg>
                </SideLink>
              </li>
              <li><SideLink href="#" $level={2} $active>Біржа вантажів</SideLink></li>
              <li><SideLink href="#" $level={2}>Біржа транспортних засобів</SideLink></li>
              <li><SideLink href="#" $level={2}>Мої пропозиції транспортних засобів</SideLink></li>
            </Group>
            <Group $loose>
              <li><SideLink href="#" $level={1}><OrdersIcon /><TopLabel>ЗАЯВКИ</TopLabel><Dot /></SideLink></li>
              <li><SideLink href="#" $level={1}><SatelliteIcon /><TopLabel>МОНІТОРИНГ ОТРИМАНИХ ВАНТАЖІВ</TopLabel></SideLink></li>
            </Group>
            <div>
              <MoreGroup>{moreLinks.map((t) => <li key={t}><SideLink href="#">{t}</SideLink></li>)}</MoreGroup>
              <MoreGroup $last>
                <li><SideLink href="#">Факторинг</SideLink></li>
                <li><SideLink href="#">Стягнення заборгованості</SideLink></li>
              </MoreGroup>
            </div>
          </Side>
          <Main>
            <PageHead>
              <HeadLeft>
                <PageTitle>Біржа вантажів</PageTitle>
                <Tabs>
                  <Tab $active>всі - всі</Tab>
                  <Tab>Обрані</Tab>
                  <AddTab><Plus size={10} />ДОДАТИ</AddTab>
                </Tabs>
              </HeadLeft>
              <HeadActions>
                <Button $kind="line" $radius={2}>Додати вантаж</Button>
                <Button $kind="line" $radius={2}>Додати транспортний засіб</Button>
              </HeadActions>
            </PageHead>
            <Filters onSubmit={(e) => e.preventDefault()}>
              <Field $col={1}>
                <LabelRow><Label htmlFor="from">Завантаження <Pin /></Label><LinkButton $top={11}>ВИКЛЮЧИТИ</LinkButton></LabelRow>
                <Picker id="from" text="Країна, поштовий індекс, місто" />
                <LinkButton $top={8}><Plus />ДОДАТИ МІСЦЕ РОЗТАШУВАННЯ</LinkButton>
              </Field>
              <Swap aria-label="Поміняти місцями">
                <svg width="16" height="16" viewBox="0 0 16 16" fill="#547080"><path d="M0 3.500H11V0.500L16 4.500L11 8.500V5.500H0ZM16 13H5V16L0 12L5 8V11H16Z" /></svg>
              </Swap>
              <Field $col={3}>
                <LabelRow><Label htmlFor="to">Розвантаження <Pin /></Label><LinkButton $top={11}>ВИКЛЮЧИТИ</LinkButton></LabelRow>
                <Picker id="to" text="Країна, поштовий індекс, місто" />
                <LinkButton $top={8}><Plus />ДОДАТИ МІСЦЕ РОЗТАШУВАННЯ</LinkButton>
              </Field>
              <Field $col={5}>
                <LabelRow><Label htmlFor="kind">Тип кузова</Label></LabelRow>
                <Picker id="kind" text="Виберіть зі списку" />
                <Checks>
                  {['Вантажівка', 'Вантажівка(3.5т - 12т)', 'Бус(<= 3.5т)', 'Сцепка'].map((t) => <Check key={t}><input type="checkbox" />{t}</Check>)}
                </Checks>
              </Field>
              <Field $col={7}>
                <LabelRow><Label htmlFor="min">Вага (т)</Label></LabelRow>
                <Range><Input id="min" placeholder="З" /><span>-</span><Input aria-label="Вага до" placeholder="До" /></Range>
              </Field>
              <Field $col={9}>
                <LabelRow><Label htmlFor="saved">Збережені фільтри</Label></LabelRow>
                <Picker id="saved" text="Вибрати із списку" />
              </Field>
              <Field $col={11}>
                <SearchButton $kind="fill">Пошук</SearchButton>
                <CenterLink $top={23}>БІЛЬШЕ ФІЛЬТРІВ</CenterLink>
              </Field>
            </Filters>
            <Results>
              <Summary>Знайдено <b>158197</b> пропозицій <a href="#">Показати на карті</a></Summary>
              <TableArea>
                <Table>
                  <thead>
                    <tr>
                      <Th $w={320} $pad={20}>МІСЦЕ ЗАВАНТАЖЕННЯ</Th>
                      <Th $w={324} $pad={22}>МІСЦЕ РОЗВАНТАЖЕННЯ</Th>
                      <Th $w={40} />
                      <Th />
                      <Th $w={121} $pad={3}>ЦІНА</Th>
                      <Th $w={109} $pad={1}>РОЗМІЩЕНО<svg width="12" height="8" viewBox="0 0 12 8" fill="none" stroke="#7a7a7a" strokeWidth="2"><path d="M1 1L6 6.500L11 1" /></svg></Th>
                      <Th $w={287} $pad={10}>ЗАМОВНИК</Th>
                      <Th $w={67} />
                      <Th $w={12} />
                    </tr>
                  </thead>
                  <tbody>
                    {rows.map((r, i) => (
                      <tr key={i}>
                        <Td $pad={11} $edge><PlaceCell p={r.from} /></Td>
                        <Td $pad={11}><PlaceCell p={r.to} /></Td>
                        <Td>{r.load && <LoadIcon side={r.load === 'side'} />}</Td>
                        <Td>
                          {r.body && <Name>{r.body}</Name>}
                          {r.body && <Line><Muted>Будь-які, FTL</Muted></Line>}
                          {r.size && <Line><Muted>Dimensions:</Muted> {r.size}</Line>}
                        </Td>
                        <Td>
                          {r.price ? <Name>{r.price}</Name> : <Line>-</Line>}
                          {r.term && <Line><Muted>Term:</Muted> {r.term}</Line>}
                        </Td>
                        <Td><Name>17.06.2020</Name><Line>14:51</Line></Td>
                        <Td $rule={r.rule}><ClientArt c={r.client} seed={i * 101 + 7} /></Td>
                        <Td $pad={3}>
                          <IconButton aria-label="Дії">
                            <svg width="6" height="16" viewBox="0 0 6 16" fill="#b4b4b4"><circle cx="3" cy="2.200" r="2.200" /><circle cx="3" cy="8" r="2.200" /><circle cx="3" cy="13.800" r="2.200" /></svg>
                          </IconButton>
                        </Td>
                        <Td $edge $rule="none" />
                      </tr>
                    ))}
                    <tr><Td $edge colSpan={8} /><Td $edge $rule="none" /></tr>
                  </tbody>
                </Table>
                <ScrollThumb />
              </TableArea>
            </Results>
          </Main>
        </Body>
      </Page>
      <Overlay>
        <MenuFrame />
        <Pointer width="12" height="19" viewBox="0 0 12 19"><path d="M1 0L11 11H7L9 17H6L4 12L1 15Z" fill="#fff" /><path d="M6 17h3v2h-3Z" fill="#111" /></Pointer>
        <Dialog role="dialog" aria-label="Виберіть область">
          <DialogHead>
            <DialogTitle>Виберіть область</DialogTitle>
            <IconButton aria-label="Закрити"><Cross color="#c8cbcc" size={12} /></IconButton>
          </DialogHead>
          <DialogBody>
            <Selected>
              Вибрані області (макс.<Amount>10)</Amount>:
              <Tag>DE <Cross color="#fff" /></Tag>
              <Tag>PL <Cross color="#fff" /></Tag>
            </Selected>
            <MapBox>
              <RegionMap />
              <ZoomBox>
                <ZoomButton aria-label="Збільшити"><Plus size={10} /></ZoomButton>
                <ZoomButton aria-label="Зменшити"><svg width="10" height="2"><rect width="10" height="2" fill={blue} /></svg></ZoomButton>
              </ZoomBox>
              <Credit>System Trans.eu &amp; <a href="#">© OpenStreetMap contributors, ODbl</a></Credit>
            </MapBox>
          </DialogBody>
          <DialogFoot>
            <CancelButton $kind="line">Скасувати</CancelButton>
            <SaveFrame><SaveButton $kind="fill">Зберегти</SaveButton></SaveFrame>
          </DialogFoot>
        </Dialog>
      </Overlay>
    </>
  );
}
